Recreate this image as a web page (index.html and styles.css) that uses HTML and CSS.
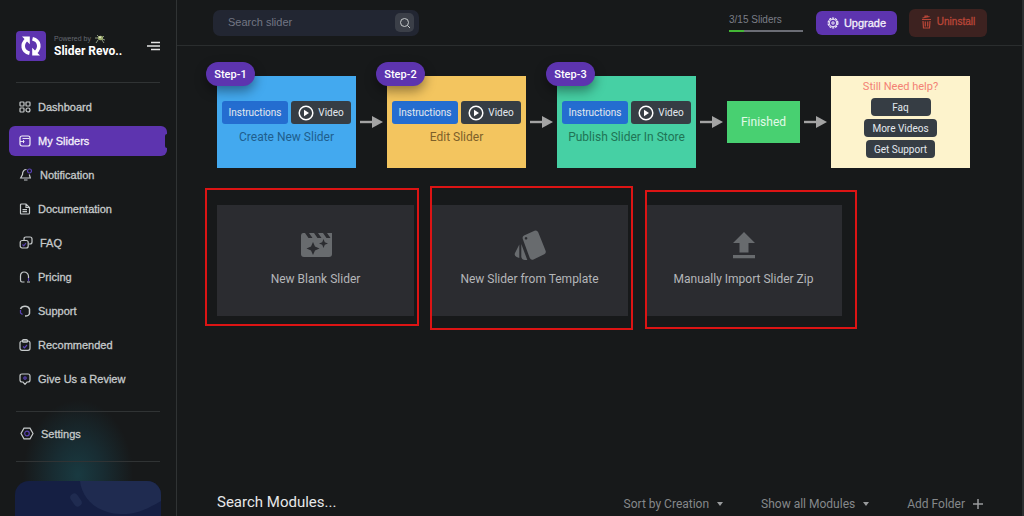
FILE: index.html
```html
<!DOCTYPE html>
<html lang="en">
<head>
<meta charset="utf-8">
<meta name="viewport" content="width=device-width, initial-scale=1">
<title>Slider Revolution</title>
<link rel="stylesheet" href="styles.css">
</head>
<body>
<svg class="defs" aria-hidden="true">
  <symbol id="arrow" viewBox="0 0 23 12"><path d="M0 6h13" stroke="#a3a3a3" stroke-width="2.4"/><path d="M12 0l11 6-11 6z" fill="#a3a3a3"/></symbol>
  <symbol id="play" viewBox="0 0 16 16"><circle cx="8" cy="8" r="6.8" fill="none" stroke="#fff" stroke-width="1.5"/><path d="M6 4.800l5 3.200-5 3.200z" fill="#fff"/></symbol>
</svg>
<div class="shell">
  <aside class="sidebar">
    <div class="brand">
      <svg class="logo" viewBox="0 0 30 30"><rect width="30" height="30" rx="4" fill="#5d34af"/><g fill="none" stroke="#fff" stroke-width="3.600"><path d="M13.500 22.300C6 20.500 5.500 13 10.500 8.500"/><path d="M16.500 7.700C24 9.500 24.500 17 19.500 21.500"/></g><path d="M6 5.500h7.800v7.700zM24 24.500h-7.800v-7.700z" fill="#fff"/></svg>
      <div class="brand-text">
        <span class="powered">Powered by
          <svg class="bug" viewBox="0 0 11 10"><path d="M2 1l2 2M9 2L7 4M0 4h4M7 5l3 1M3 6L1 9M7 6l2 3" stroke="#8b9580" stroke-width="1"/><ellipse cx="5.500" cy="4" rx="2.700" ry="2.200" fill="#9bab6c"/><circle cx="5" cy="3.300" r="1" fill="#e2e6c8"/></svg>
        </span>
        <strong class="brand-name">Slider Revo..</strong>
      </div>
      <button class="menu" aria-label="Toggle menu"><svg viewBox="0 0 13 10"><path d="M4 1.500h9M0 5h13M4 8.500h9" stroke="#e4e4e4" stroke-width="1.300"/></svg></button>
    </div>
    <nav class="nav">
      <a class="nav-item" href="#"><svg class="icon" viewBox="0 0 12 12"><rect x="1" y="1" width="4" height="4" rx=".8"/><rect x="7" y="1" width="4" height="4" rx=".8"/><rect x="1" y="7" width="4" height="4" rx=".8"/><circle cx="9" cy="9" r="2"/></svg>Dashboard</a>
      <a class="nav-item active" href="#" aria-current="page"><svg class="icon" viewBox="0 0 12 12"><rect x="1" y="1" width="10" height="10" rx="2"/><path d="M3.500 3.500h7M1 6.500h4.500M4.500 5v3" stroke-width=".9"/></svg>My Sliders</a>
      <a class="nav-item" href="#"><svg class="icon wide" viewBox="0 0 14 13"><path d="M7.500 1.500C4.500 1.500 3.500 4 3.500 6.500L1.700 10h9.600L10.300 6.500M5 12h3.500"/><circle class="accent" cx="10.500" cy="3" r="2"/></svg>Notification</a>
      <a class="nav-item" href="#"><svg class="icon" viewBox="0 0 12 12"><path d="M1.500 2q0-1 1-1H7l3.500 3.500V10q0 1-1 1h-7q-1 0-1-1zM7 1v3.500h3.500M3.500 6.700H8M3.500 8.700H8"/></svg>Documentation</a>
      <a class="nav-item" href="#"><svg class="icon wide" viewBox="0 0 14 13"><path d="M5 4V3q0-2 2-2h4q2 0 2 2v3q0 2-2 2h-1"/><rect x="1.200" y="4.500" width="8" height="7.500" rx="2"/><path class="accent" d="M3.500 8.500l1.300 1.300L7 7"/></svg>FAQ</a>
      <a class="nav-item" href="#"><svg class="icon" viewBox="0 0 12 12"><path d="M5.500 11H3q-1.500 0-1.500-2V5C1.500 2.500 3 1 5 1s4 1 4.500 4v2M8 11h3"/><path class="accent" d="M9.500 7v3"/></svg>Pricing</a>
      <a class="nav-item" href="#"><svg class="icon" viewBox="0 0 12 12"><path d="M1.500 4C3 .3 9 .3 10.500 4v4.500C10.200 10.300 8.500 11 6 11" stroke-width="1.500"/><path class="accent" d="M1.500 5v3l2 1.500"/></svg>Support</a>
      <a class="nav-item" href="#"><svg class="icon" viewBox="0 0 12 12"><rect x="1" y="2" width="10" height="9.300" rx="2"/><rect x="3.500" y=".7" width="5" height="2.500" rx="1"/><path class="accent" d="M4 7.500l1.500 1.300L8 6"/></svg>Recommended</a>
      <a class="nav-item" href="#"><svg class="icon" viewBox="0 0 12 12"><path d="M3 1h6q2 0 2 2v4q0 2-2 2H8l-2 2.300L4 9H3Q1 9 1 7V3q0-2 2-2z"/><circle class="accent" cx="6" cy="5" r="1.200"/></svg>Give Us a Review</a>
    </nav>
    <div class="settings">
      <a class="nav-item" href="#"><svg class="icon wide" viewBox="0 0 14 13"><path d="M4 1.200h6l3 5.300-3 5.300H4L1 6.500z"/><circle class="accent" cx="7" cy="6.500" r="2.300"/></svg>Settings</a>
    </div>
    <div class="promo">
      <svg viewBox="0 0 146 60" preserveAspectRatio="xMidYMin slice"><path d="M65 0h81v20C124 33 116 33 105 33 82 32 67 18 65 0z" fill="#1f2b50"/><rect x="57" y="12" width="8" height="14" rx="4" fill="#1f2b50" transform="rotate(-35 61 19)"/></svg>
    </div>
  </aside>

  <main class="main">
    <header class="topbar">
      <form class="search">
        <input type="text" placeholder="Search slider" aria-label="Search slider">
        <button type="button" aria-label="Search"><svg viewBox="0 0 12 12"><circle cx="5.500" cy="5.500" r="4"/><path d="M8.500 8.500L11 11"/></svg></button>
      </form>
      <div class="account">
        <label class="quota">3/15 Sliders<progress value="3" max="15"></progress></label>
        <button class="upgrade"><svg viewBox="0 0 12 12"><circle cx="6" cy="6" r="4.900" stroke-dasharray="2.200 .88" stroke-width="1.200"/><circle cx="6" cy="6" r="3.800"/><circle cx="6" cy="6" r="1.200"/></svg>Upgrade</button>
        <button class="uninstall"><svg viewBox="0 0 11 14"><path d="M1 4.500h9M2 6l.5 7h6L9 6M4.300 6.500v5M6.700 6.500v5M1.500 3l7-1.500M4 2V1h3"/></svg>Uninstall</button>
      </div>
    </header>

    <section class="steps">
      <article class="step blue">
        <span class="pill">Step-1</span>
        <div class="step-actions"><button class="info">Instructions</button><button class="video"><svg><use href="#play"/></svg>Video</button></div>
        <h2>Create New Slider</h2>
      </article>
      <svg class="arrow"><use href="#arrow"/></svg>
      <article class="step yellow">
        <span class="pill">Step-2</span>
        <div class="step-actions"><button class="info">Instructions</button><button class="video"><svg><use href="#play"/></svg>Video</button></div>
        <h2>Edit Slider</h2>
      </article>
      <svg class="arrow"><use href="#arrow"/></svg>
      <article class="step green">
        <span class="pill">Step-3</span>
        <div class="step-actions"><button class="info">Instructions</button><button class="video"><svg><use href="#play"/></svg>Video</button></div>
        <h2>Publish Slider In Store</h2>
      </article>
      <svg class="arrow"><use href="#arrow"/></svg>
      <div class="finished">Finished</div>
      <svg class="arrow"><use href="#arrow"/></svg>
      <article class="step help">
        <h2>Still Need help?</h2>
        <button class="faq">Faq</button>
        <button>More Videos</button>
        <button>Get Support</button>
      </article>
    </section>

    <section class="tiles">
      <div class="tile-wrap first">
        <button class="tile"><svg viewBox="0 0 36 36"><path fill-rule="evenodd" d="M5 6h2l3.500 5h4L11 6h5l3.500 5h4L20 6h5l3.500 5h4L29 6h5v21q0 3-3 3H6q-3 0-3-3V8.500Q3 6 5 6zM15 15l-2 4.500L8.500 21.500 13 23.500 15 28l2-4.500 4.500-2L17 19.500zM25.500 12l-1.300 3.200L21 16.500l3.200 1.300 1.300 3.200 1.300-3.200 3.200-1.300-3.200-1.300z"/></svg>New Blank Slider</button>
      </div>
      <div class="tile-wrap second">
        <button class="tile"><svg viewBox="0 0 36 36"><path fill-rule="evenodd" d="M12 8.500L22.500 3.700q2.500-1 3.700 1.500L33.500 23.500q1 2.500-1.200 3.700L21.500 32.500q-2.500 1-3.700-1.400L10.800 12q-.8-2.400 1.200-3.500zM14 10a1.300 1.300 0 1 0 .1 0z"/><path d="M9.300 17l6 16h-2.300q-3 0-3.700-3zM7.300 17.500V31l-2.700-1q-2.700-1.500-1.600-4z"/></svg>New Slider from Template</button>
      </div>
      <div class="tile-wrap third">
        <button class="tile"><svg viewBox="0 0 36 36"><path d="M18 5L7 16h6.500v9.500h9V16H29zM7 28h22v3.200H7z"/></svg>Manually Import Slider Zip</button>
      </div>
    </section>

    <footer class="modules">
      <h1>Search Modules...</h1>
      <div class="filters">
        <button>Sort by Creation<svg class="caret" viewBox="0 0 6 4"><path d="M0 0h6L3 4z"/></svg></button>
        <button>Show all Modules<svg class="caret" viewBox="0 0 6 4"><path d="M0 0h6L3 4z"/></svg></button>
        <button>Add Folder<svg class="plus" viewBox="0 0 10 10"><path d="M5 0v10M0 5h10" stroke="#999b9d" stroke-width="1.500"/></svg></button>
      </div>
    </footer>
  </main>
</div>
</body>
</html>
```

FILE: styles.css
```css
* { box-sizing: border-box; }
body { margin: 0; background: #17191a; color: #c6cacb; font-family: "Liberation Sans", Arial, sans-serif; font-size: 11px; }
button { border: 0; margin: 0; padding: 0; background: none; color: inherit; font: inherit; cursor: pointer; }
h1, h2 { margin: 0; font-weight: 400; }
svg { display: block; flex: none; }
.defs { position: absolute; width: 0; height: 0; }
.shell { display: flex; height: 100vh; overflow: hidden; border-right: 2px solid #2b2e2f; }

.sidebar { flex: none; width: 177px; border-right: 1px solid #303334; display: flex; flex-direction: column; background: radial-gradient(ellipse 55px 75px at 78px 475px, #193a41, #182c32 45%, #17191a); }
.brand { display: flex; align-items: center; gap: 8px; margin: 0 16px; padding: 31px 0 21px; border-bottom: 1px solid #303334; }
.logo { width: 30px; height: 30px; }
.brand-text { flex: 1; display: flex; flex-direction: column; }
.powered { display: flex; align-items: center; gap: 4px; font-size: 7px; line-height: 10px; color: #656973; white-space: nowrap; }
.bug { width: 11px; height: 10px; }
.brand-name { font: 700 12px/14px Roboto, sans-serif; color: #fff; }
.menu svg { width: 13px; height: 10px; }
.nav { display: flex; flex-direction: column; gap: 4px; padding: 9px 9px 17px; }
.nav-item { display: flex; align-items: center; gap: 7px; height: 30px; padding: 0 0 1px 10px; border-radius: 6px; color: #c6cacb; text-decoration: none; -webkit-text-stroke: 0.300px currentColor; }
.nav-item.active { background: #5d34af; color: #f4f0fa; position: relative; }
.nav-item.active::after { content: ""; position: absolute; right: 0; top: 8px; width: 2px; height: 14px; background: #17191a; border-radius: 2px 0 0 2px; }
.icon { width: 12px; height: 12px; fill: none; stroke: currentColor; stroke-width: 1.200; }
.icon.wide { width: 14px; height: 13px; }
.icon .accent { stroke: #5a43b5; }
.settings { margin: 0 16px; padding: 7px 0 12px; border: solid #303334; border-width: 1px 0; }
.settings .nav-item { padding-left: 4px; }
.promo { flex: 1; margin: 19px 15px 0; border-radius: 14px 14px 0 0; background: #151f43; overflow: hidden; }
.promo svg { width: 100%; height: 60px; }

.main { flex: 1; min-width: 0; display: flex; flex-direction: column; }
.topbar { display: flex; align-items: center; justify-content: space-between; height: 46px; padding: 0 35px 0 36px; border-bottom: 1px solid #2a2d2e; }
.search { display: flex; align-items: center; width: 206px; height: 26px; padding: 0 5px 0 15px; border-radius: 7px; background: #222632; }
.search input { flex: 1; min-width: 0; padding: 0 0 2px; border: 0; outline: 0; background: none; color: #c6cacb; font: inherit; }
.search input::placeholder { color: #727684; opacity: 1; }
.search button { display: grid; place-items: center; width: 19px; height: 19px; border-radius: 5px; background: #3b3f48; }
.search svg { width: 12px; height: 12px; fill: none; stroke: #c6cacb; }
.account { display: flex; align-items: center; }
.quota { width: 74px; margin-right: 13px; font-size: 10px; line-height: 14px; color: #7b7e87; }
.quota progress { display: block; width: 100%; height: 2px; margin-top: 3px; border: 0; appearance: none; background: #6b6d75; }
.quota progress::-webkit-progress-bar { background: #6b6d75; }
.quota progress::-webkit-progress-value { background: #43b735; }
.account button { display: flex; align-items: center; justify-content: center; border-radius: 6px; }
.account button svg { fill: none; stroke: currentColor; }
.account .upgrade { gap: 5px; width: 81px; height: 24px; margin-right: 12px; background: #5d34af; color: #f4f0fa; -webkit-text-stroke: 0.300px currentColor; }
.upgrade svg { width: 12px; height: 12px; }
.account .uninstall { gap: 5px; width: 78px; height: 28px; padding-bottom: 2px; background: #3d2220; color: #ba4638; font-size: 10px; -webkit-text-stroke: 0.300px currentColor; }
.uninstall svg { width: 11px; height: 14px; stroke-width: 1.200; }

.steps { display: flex; align-items: center; gap: 4px; padding: 30px 0 0 40px; font-family: Roboto, sans-serif; }
.step { position: relative; display: flex; flex-direction: column; align-items: center; width: 139px; height: 92px; padding-top: 25px; }
.step h2 { margin-top: 5px; font-size: 12px; line-height: 16px; }
.blue { background: #43a9ef; color: #205e8d; }
.yellow { background: #f3c55f; color: #7d602a; }
.green { background: #46d0a4; color: #207455; }
.pill { position: absolute; left: -11px; top: -14px; width: 49px; height: 24px; border-radius: 12px; background: #5d34af; box-shadow: 0 5px 12px rgba(0, 0, 0, .4); color: #fff; font-size: 11px; font-weight: 500; line-height: 25px; text-align: center; }
.step-actions { display: flex; gap: 3px; }
.step-actions button { display: flex; align-items: center; justify-content: center; gap: 4px; height: 23px; border-radius: 3px; color: #e4e9ee; font-size: 10px; }
.step-actions .info { width: 66px; background: #246dd0; }
.step-actions .video { width: 60px; background: #363d44; }
.video svg { width: 16px; height: 16px; }
.arrow { width: 23px; height: 12px; }
.finished { width: 73px; height: 42px; background: #48d071; color: #e1fae9; font-size: 12px; line-height: 43px; text-align: center; }
.step.help { gap: 3px; padding-top: 3px; background: #fdf3cc; }
.help h2 { margin: 0; color: #f38174; font-size: 11px; }
.help button { height: 18px; padding: 0 8px; border-radius: 4px; background: #363d44; color: #e4e9ee; font-size: 10px; }
.help .faq { width: 60px; }

.tiles { display: flex; gap: 17px; padding: 37px 0 0 40px; }
.tile-wrap { position: relative; width: 197px; }
.tile { display: flex; flex-direction: column; align-items: center; width: 100%; height: 111px; padding-top: 22px; background: #2b2c30; color: #b4b6b9; font: 12px/16px Roboto, sans-serif; }
.tile svg { width: 36px; height: 36px; margin-bottom: 8px; fill: #686b6e; }
.tile-wrap::after { content: ""; position: absolute; border: 2px solid #dc1414; pointer-events: none; }
.first::after { inset: -17px -5px -10px -12px; }
.second::after { inset: -19px -5px -14px -1px; }
.third::after { inset: -15px -15px -13px 0; }

.modules { display: flex; align-items: flex-end; justify-content: space-between; margin-top: auto; padding: 0 39px 2px 40px; font-family: Roboto, sans-serif; }
.modules h1 { color: #e7e8e9; font-size: 15px; line-height: 24px; }
.filters { display: flex; gap: 38px; color: #85888a; font-size: 12px; line-height: 20px; }
.filters button { display: flex; align-items: center; gap: 8px; }
.caret { width: 6px; height: 4px; fill: #999b9d; }
.plus { width: 10px; height: 10px; }
```
